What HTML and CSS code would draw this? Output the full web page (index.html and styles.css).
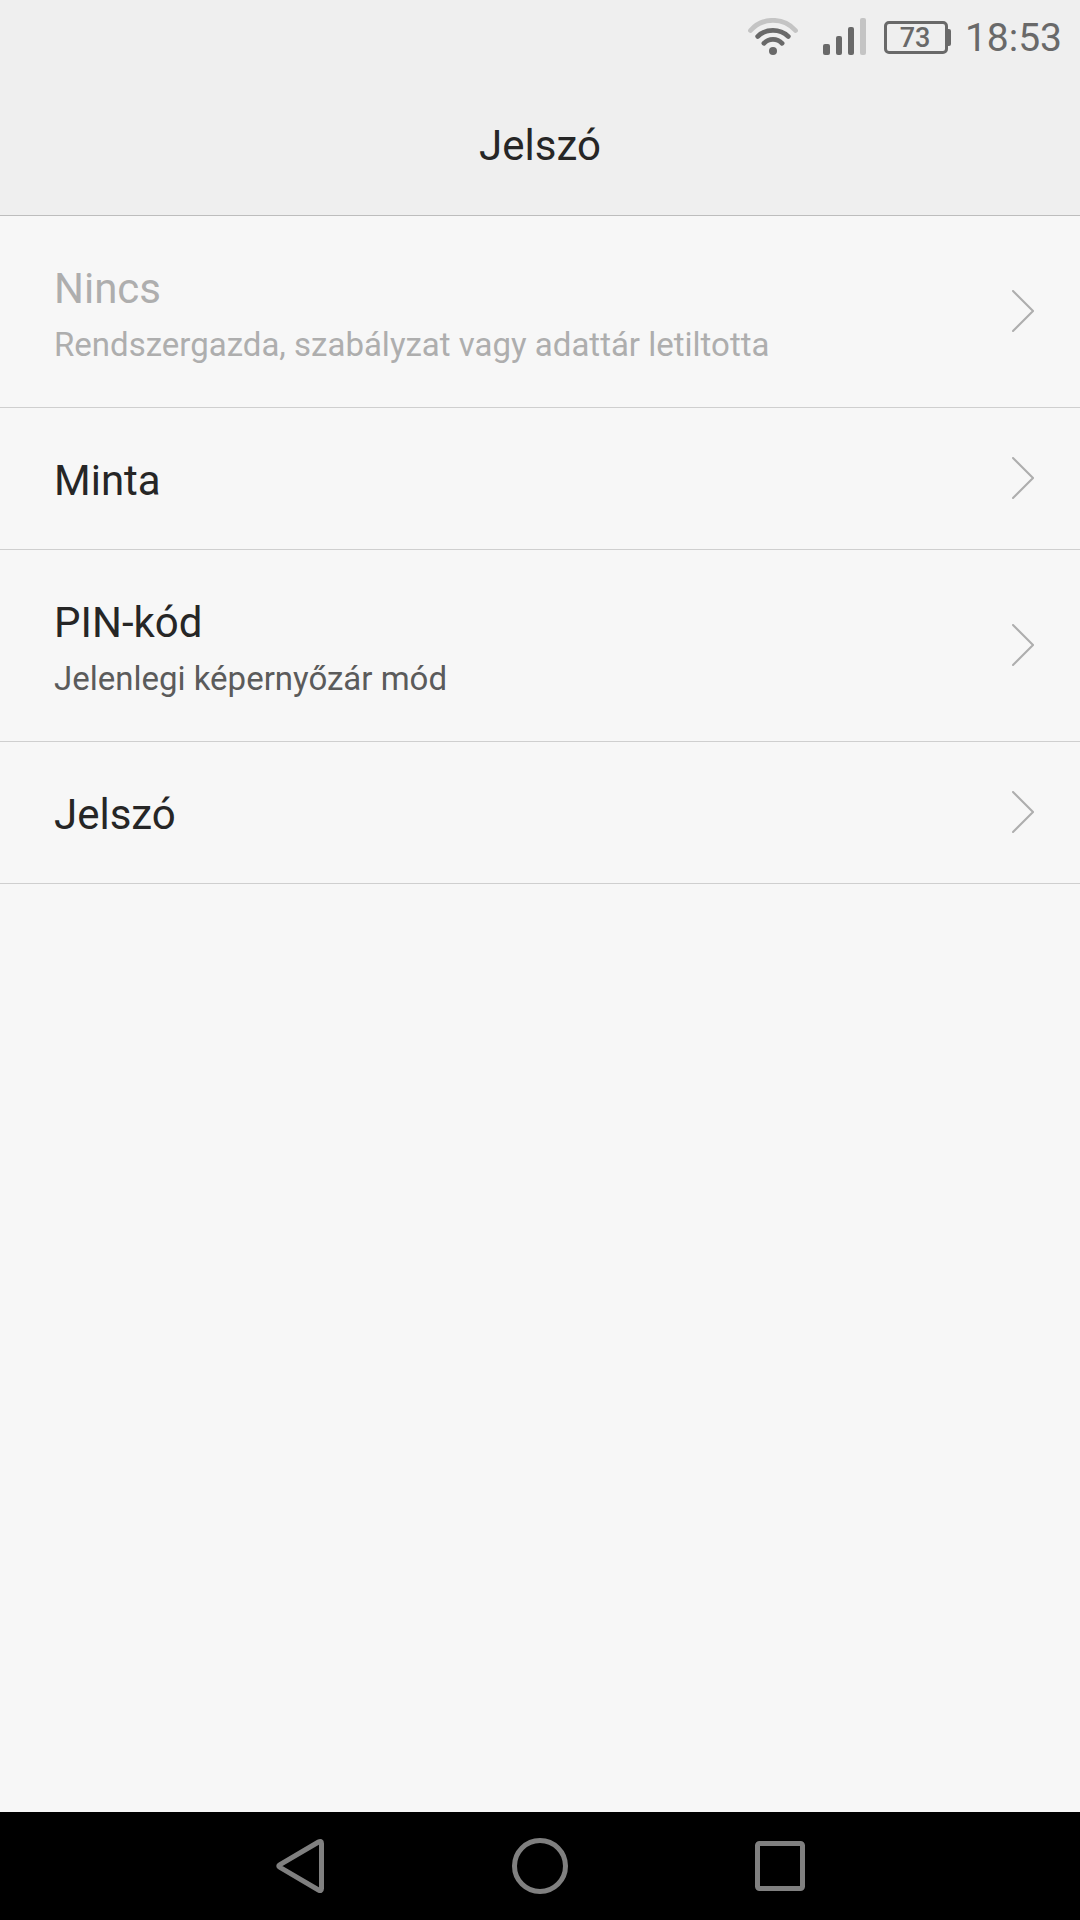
FILE: index.html
```html
<!DOCTYPE html>
<html lang="hu">
<head>
<meta charset="utf-8">
<title>Jelszó</title>
<link rel="stylesheet" href="styles.css">
</head>
<body>
<header class="top">
  <div class="status">
    <svg class="wifi" width="50" height="37" viewBox="0 0 50 37" fill="none" stroke="#696969" stroke-width="4.8" stroke-linecap="round">
      <path d="M2.500 12.500A30 30 0 0 1 47.500 12.500" stroke="#c4c4c4"/>
      <path d="M9.700 18.400A22.500 22.500 0 0 1 40.300 18.400"/>
      <path d="M15.900 25.300A12.500 12.500 0 0 1 34.100 25.300"/>
      <circle cx="25" cy="33" r="4" fill="#696969" stroke="none"/>
    </svg>
    <svg class="signal" width="43" height="37" viewBox="0 0 43 37" fill="#696969">
      <rect x="0" y="26" width="7" height="11" rx="2"/>
      <rect x="13" y="18" width="6" height="19" rx="2"/>
      <rect x="25" y="9" width="6" height="28" rx="2"/>
      <rect x="37" y="0" width="6" height="37" rx="2" fill="#c4c4c4"/>
    </svg>
    <div class="battery"><span class="level">73</span></div>
    <span class="clock">18:53</span>
  </div>
  <h1 class="title">Jelszó</h1>
</header>
<main class="list">
  <div class="row tall disabled">
    <div class="text"><div class="name">Nincs</div><div class="note">Rendszergazda, szabályzat vagy adattár letiltotta</div></div>
    <svg class="chevron" width="22" height="42" viewBox="0 0 22 42"><path d="M1 1 21 21 1 41"/></svg>
  </div>
  <div class="row">
    <div class="text"><div class="name">Minta</div></div>
    <svg class="chevron" width="22" height="42" viewBox="0 0 22 42"><path d="M1 1 21 21 1 41"/></svg>
  </div>
  <div class="row tall">
    <div class="text"><div class="name">PIN-kód</div><div class="note">Jelenlegi képernyőzár mód</div></div>
    <svg class="chevron" width="22" height="42" viewBox="0 0 22 42"><path d="M1 1 21 21 1 41"/></svg>
  </div>
  <div class="row">
    <div class="text"><div class="name">Jelszó</div></div>
    <svg class="chevron" width="22" height="42" viewBox="0 0 22 42"><path d="M1 1 21 21 1 41"/></svg>
  </div>
</main>
<nav class="nav">
  <svg width="60" height="60" viewBox="0 0 60 60"><path d="M51.500 7.500Q51.500 4.400 48.500 6L10 28.600Q7.500 30 10 31.400L48.500 54Q51.500 55.600 51.500 52.500Z"/></svg>
  <svg width="60" height="60" viewBox="0 0 60 60"><circle cx="30" cy="30" r="25.500"/></svg>
  <svg width="60" height="60" viewBox="0 0 60 60"><rect x="7.500" y="7.500" width="45" height="45" rx="2"/></svg>
</nav>
</body>
</html>
```

FILE: styles.css
```css
* { box-sizing: border-box; }
body {
  margin: 0;
  width: 1080px;
  height: 1920px;
  display: flex;
  flex-direction: column;
  overflow: hidden;
  background: #f7f7f7;
  color: #262626;
  font-family: Roboto, sans-serif;
}
.top {
  height: 216px;
  background: #efefef;
  border-bottom: 1px solid #bdbdbd;
}
.status {
  height: 73px;
  padding-right: 18px;
  display: flex;
  align-items: center;
  justify-content: flex-end;
  color: #696969;
}
.signal { margin-left: 25px; }
.battery {
  position: relative;
  width: 64px;
  height: 33px;
  margin: 2px 16px 0 18px;
  padding-right: 2px;
  border: 3px solid #696969;
  border-radius: 5px;
  text-align: center;
  font: 500 27px/29px Roboto, sans-serif;
}
.battery::after {
  content: "";
  position: absolute;
  left: 60px;
  top: 5px;
  width: 4px;
  height: 17px;
  border-radius: 0 2px 2px 0;
  background: #696969;
}
.clock {
  width: 98px;
  padding-top: 2px;
  text-align: right;
  font-size: 39px;
}
.title {
  margin: 0;
  height: 142px;
  line-height: 146px;
  text-align: center;
  font-size: 42px;
  font-weight: 400;
}
.list { flex: 1; }
.row {
  height: 142px;
  padding: 0 46px 0 54px;
  display: flex;
  align-items: center;
  justify-content: space-between;
  border-bottom: 1px solid #cfcfcf;
}
.text { padding-top: 4px; }
.tall { height: 192px; }
.tall .text { padding-top: 6px; }
.name { font-size: 42px; line-height: 60px; }
.note { font-size: 33px; line-height: 52px; color: #5b5b5b; }
.disabled .name, .disabled .note { color: #aeaeae; }
.chevron {
  margin-bottom: 1px;
  fill: none;
  stroke: #aeaeae;
  stroke-width: 2;
  stroke-linecap: round;
}
.nav {
  height: 108px;
  display: flex;
  align-items: center;
  justify-content: center;
  gap: 180px;
  background: #000;
}
.nav svg { fill: none; stroke: #808080; stroke-width: 5; }
```
